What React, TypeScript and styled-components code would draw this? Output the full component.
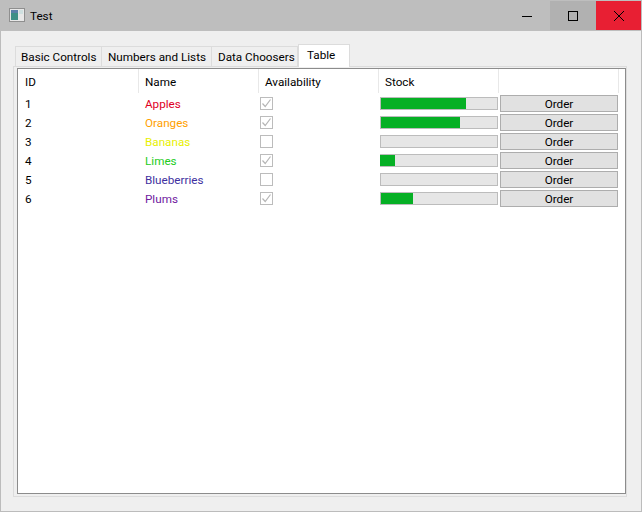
import { createGlobalStyle } from "styled-components";
import styled from "styled-components";

const GlobalStyle = createGlobalStyle`
  html, body {
    margin: 0;
    padding: 0;
    width: 642px;
    height: 512px;
    overflow: hidden;
  }
  body {
    font-family: Roboto, "Open Sans", "Liberation Sans", sans-serif;
    font-size: 11.7px;
    color: #000;
  }
`;

const Window = styled.div`
  width: 642px;
  height: 512px;
  box-sizing: border-box;
  display: flex;
  flex-direction: column;
  background-color: #efefef;
  border: 1px solid #bcbcbc;
  border-top: none;
`;

const TitleBar = styled.header`
  height: 31px;
  margin: 0 -1px;
  padding-right: 1px;
  flex-shrink: 0;
  display: flex;
  align-items: center;
  background-color: #bebebe;
`;

const AppIcon = styled.svg`
  width: 16px;
  height: 16px;
  margin-left: 9px;
  margin-right: 5px;
`;

const Title = styled.h1`
  flex-grow: 1;
  margin: 0;
  font-size: 11.7px;
  font-weight: 400;
`;

const WinBtn = styled.div<{ $bg?: string; $w?: number }>`
  width: ${(props) => props.$w ?? 46}px;
  height: 29px;
  display: flex;
  align-items: center;
  justify-content: center;
  background-color: ${(props) => props.$bg ?? "transparent"};
`;

const Body = styled.main`
  flex-grow: 1;
  display: flex;
  flex-direction: column;
  padding: 13px 14px 14px 12px;
`;

const TabBar = styled.div`
  display: flex;
  align-items: flex-end;
  height: 23px;
  padding-left: 2px;
  margin-bottom: -1px;
  position: relative;
  z-index: 1;
`;

const Tab = styled.div<{ $active?: boolean; $first?: boolean; $w: number }>`
  box-sizing: border-box;
  width: ${(props) => props.$w}px;
  height: ${(props) => (props.$active ? 23 : 21)}px;
  padding: ${(props) => (props.$active ? "2px 0 0 8px" : props.$first ? "2px 0 0 5px" : "2px 0 0 6px")};
  line-height: 16px;
  white-space: nowrap;
  background-color: ${(props) => (props.$active ? "#fff" : "#efefef")};
  border: 1px solid #dcdcdc;
  border-left: ${(props) => (props.$first || props.$active ? "1px solid #dcdcdc" : "none")};
  border-bottom: ${(props) => (props.$active ? "none" : "1px solid #dcdcdc")};
`;

const Pane = styled.div`
  flex-grow: 1;
  display: flex;
  box-sizing: border-box;
  padding: 1px 0 2px 3px;
  background-color: #efefef;
  border: 1px solid #dcdcdc;
`;

const TableFrame = styled.div`
  flex-grow: 1;
  box-sizing: border-box;
  background-color: #fff;
  border: 1px solid #8c8c8c;
  padding-left: 1px;
`;

const Row = styled.div<{ $header?: boolean }>`
  display: grid;
  grid-template-columns: repeat(5, 120px);
  height: ${(props) => (props.$header ? 25 : 19)}px;
  align-items: center;
`;

const HeadCell = styled.div`
  box-sizing: border-box;
  height: 24px;
  margin-bottom: 1px;
  padding-left: 6px;
  line-height: 27px;
  border-right: 1px solid #e8e8e8;
`;

const Cell = styled.div<{ $color?: string }>`
  padding-left: 6px;
  line-height: 18px;
  color: ${(props) => props.$color ?? "#000"};
`;

const CheckBox = styled.div`
  box-sizing: border-box;
  width: 13px;
  height: 13px;
  margin-left: 1px;
  border: 1px solid #bcbcbc;
  background-color: #fff;
`;

const CheckMark = styled.svg`
  display: block;
  width: 11px;
  height: 11px;
`;

const Bar = styled.div`
  box-sizing: border-box;
  width: 118px;
  height: 13px;
  margin-left: 1px;
  background-color: #e6e6e6;
  border: 1px solid #bcbcbc;
`;

const BarFill = styled.div<{ $flush?: boolean }>`
  height: 100%;
  margin-left: ${(props) => (props.$flush ? -1 : 0)}px;
  background-color: #06b025;
`;

const OrderBtn = styled.button`
  box-sizing: border-box;
  width: 118px;
  height: 17px;
  margin: 0 0 0 1px;
  padding: 1px 0 0;
  font: inherit;
  line-height: 14px;
  color: #000;
  background-color: #e1e1e1;
  border: 1px solid #adadad;
`;

const items = [
  { id: 1, name: "Apples", color: "#e0001f", ok: true, stock: 85 },
  { id: 2, name: "Oranges", color: "#ffa000", ok: true, stock: 79 },
  { id: 3, name: "Bananas", color: "#e8f000", ok: false, stock: 0 },
  { id: 4, name: "Limes", color: "#22cc22", ok: true, stock: 15, flush: true },
  { id: 5, name: "Blueberries", color: "#4030a0", ok: false, stock: 0 },
  { id: 6, name: "Plums", color: "#7020a0", ok: true, stock: 32 },
];

const App = () => {
  return (
    <Window>
      <GlobalStyle />
      <TitleBar>
        <AppIcon viewBox="0 0 16 16">
          <rect x="0.5" y="0.5" width="15" height="13" fill="#e8e8e8" stroke="#8f8f8f" />
          <rect x="2" y="2" width="7" height="10" fill="#3f8f86" />
          <rect x="2" y="2" width="7" height="3" fill="#5b7fa8" />
          <rect x="10" y="2" width="4" height="4" fill="#cfe0e0" />
        </AppIcon>
        <Title>Test</Title>
        <WinBtn>
          <svg width="10" height="10" viewBox="0 0 10 10">
            <path d="M0 5.5H10" stroke="#000" fill="none" />
          </svg>
        </WinBtn>
        <WinBtn $bg="#b1b1b1">
          <svg width="10" height="10" viewBox="0 0 10 10">
            <rect x="0.5" y="0.5" width="9" height="9" stroke="#000" fill="none" />
          </svg>
        </WinBtn>
        <WinBtn $bg="#e81f33" $w={45}>
          <svg width="10" height="10" viewBox="0 0 10 10">
            <path d="M0 0L10 10M10 0L0 10" stroke="#000" fill="none" />
          </svg>
        </WinBtn>
      </TitleBar>
      <Body>
        <TabBar>
          <Tab $first $w={87}>Basic Controls</Tab>
          <Tab $w={110}>Numbers and Lists</Tab>
          <Tab $w={86}>Data Choosers</Tab>
          <Tab $active $w={52}>Table</Tab>
        </TabBar>
        <Pane>
          <TableFrame>
            <Row $header>
              <HeadCell>ID</HeadCell>
              <HeadCell>Name</HeadCell>
              <HeadCell>Availability</HeadCell>
              <HeadCell>Stock</HeadCell>
              <HeadCell />
            </Row>
            {items.map((item) => (
              <Row key={item.id}>
                <Cell>{item.id}</Cell>
                <Cell $color={item.color}>{item.name}</Cell>
                <CheckBox>
                  {item.ok && (
                    <CheckMark viewBox="0 0 11 11">
                      <path d="M1.5 5.5L4.2 8.5L9.5 1.5" stroke="#b5b5b5" strokeWidth="1.2" fill="none" />
                    </CheckMark>
                  )}
                </CheckBox>
                <Bar>
                  <BarFill $flush={item.flush} style={{ width: item.stock }} />
                </Bar>
                <OrderBtn>Order</OrderBtn>
              </Row>
            ))}
          </TableFrame>
        </Pane>
      </Body>
    </Window>
  );
};

export default App;
